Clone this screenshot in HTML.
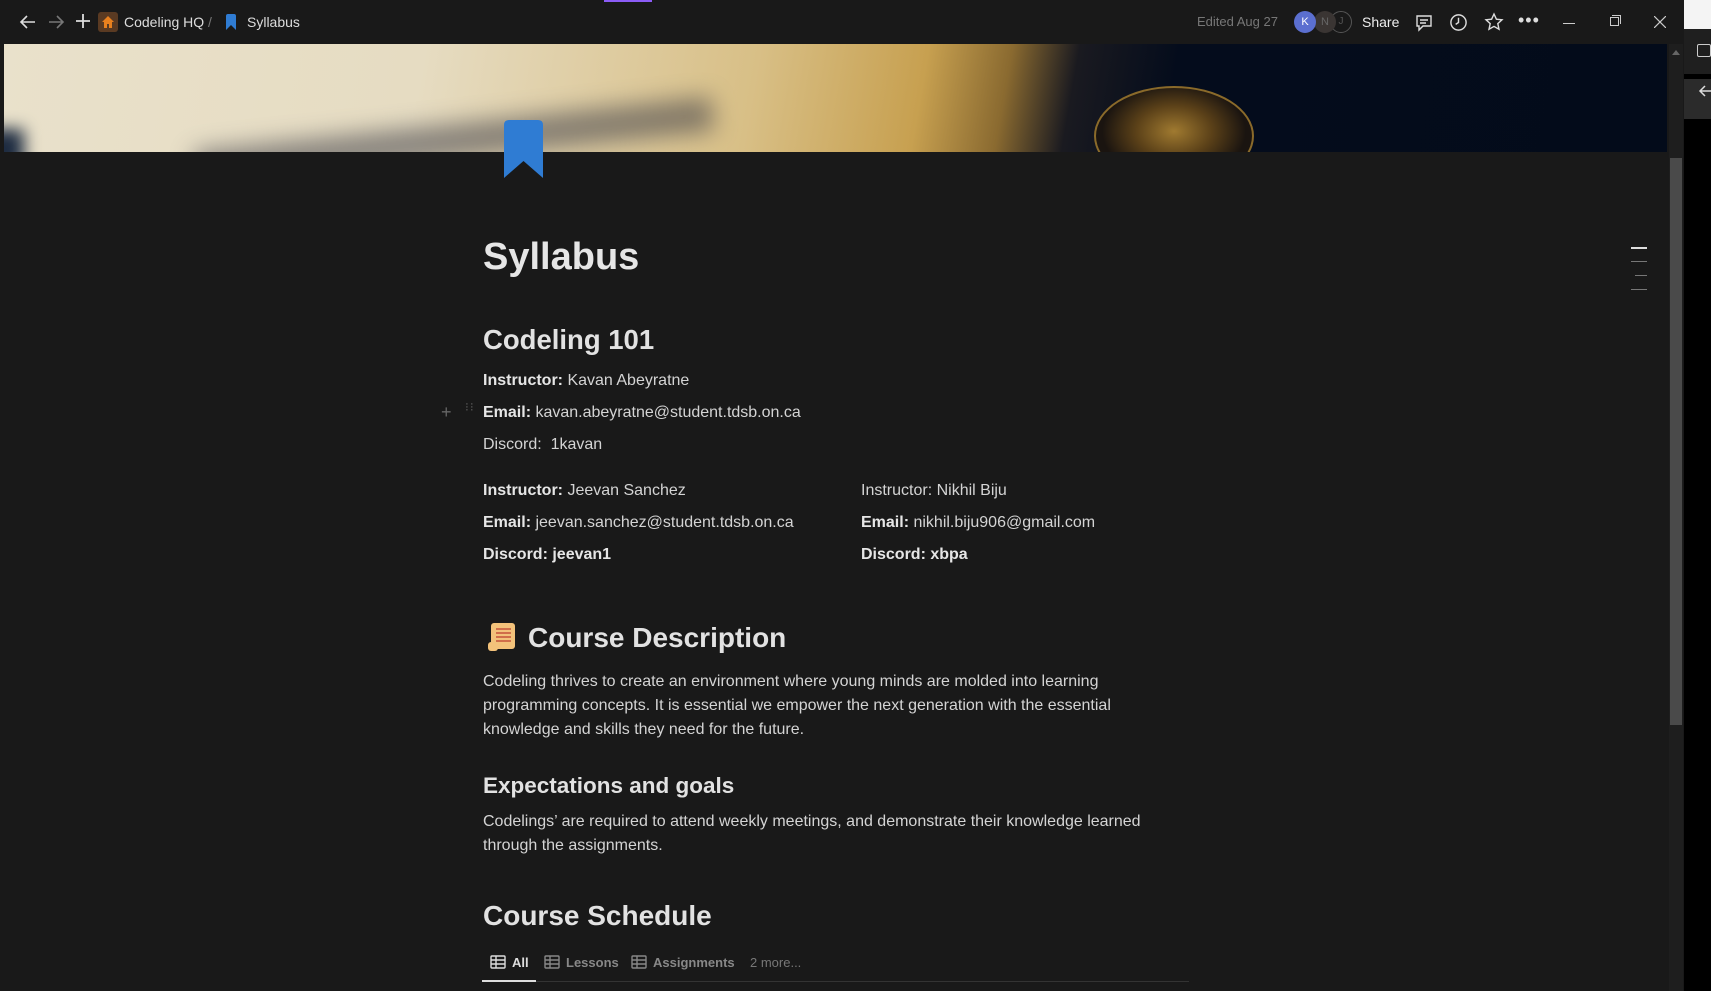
<!DOCTYPE html>
<html><head><meta charset="utf-8"><style>
*{margin:0;padding:0;box-sizing:border-box}
body{width:1711px;height:991px;background:#191919;overflow:hidden;position:relative;font-family:"Liberation Sans",sans-serif;color:#d6d6d6}
.a{position:absolute;white-space:nowrap}
.top{position:absolute;left:0;top:0;width:1684px;height:44px;background:#191919}
.banner{position:absolute;left:4px;top:44px;width:1663px;height:108px;overflow:hidden;
background:linear-gradient(100deg,#e9e1cb 0%,#e6dcc2 25%,#d8bf86 45%,#c7a050 55%,#8a6a30 60%,#1a1a20 64%,#040c1c 70%,#030b1a 100%)}
.t{font-size:16px;color:#d4d4d4}
b{color:#e6e6e6}
</style></head><body>
<div class="top"></div>
<div class="a" style="left:604px;top:0;width:48px;height:2px;background:#8b5cf6"></div>
<svg class="a" style="left:18px;top:12px" width="20" height="20" viewBox="0 0 20 20" fill="none" stroke="#ddd" stroke-width="1.6"><path d="M17 10H4M9 4l-6 6 6 6"/></svg>
<svg class="a" style="left:46px;top:12px" width="20" height="20" viewBox="0 0 20 20" fill="none" stroke="#777" stroke-width="1.6"><path d="M3 10h13M11 4l6 6-6 6"/></svg>
<svg class="a" style="left:74px;top:12px" width="18" height="18" viewBox="0 0 18 18" stroke="#ddd" stroke-width="1.8"><path d="M9 2v14M2 9h14"/></svg>
<div class="a" style="left:98px;top:12px;width:20px;height:20px;background:#5a3a22;border-radius:3px"></div>
<svg class="a" style="left:101px;top:15px" width="14" height="14" viewBox="0 0 14 14"><path d="M7 1L1 7h2v6h3V9h2v4h3V7h2z" fill="#e8801e"/></svg>
<div class="a" style="left:124px;top:14px;font-size:14px;color:#ddd">Codeling HQ <span style="color:#777">/</span></div>
<svg class="a" style="left:226px;top:14px" width="10" height="16" viewBox="0 0 10 16"><path d="M0 2Q0 0 2 0h6q2 0 2 2v14L5 11 0 16z" fill="#2f7cd3"/></svg>
<div class="a" style="left:247px;top:14px;font-size:14px;color:#ddd">Syllabus</div>
<div class="a" style="left:1197px;top:14px;font-size:13px;color:#777">Edited Aug 27</div>
<div class="a" style="left:1330px;top:11px;width:22px;height:22px;border-radius:50%;border:1px solid #555;color:#555;font-size:10px;text-align:center;line-height:20px">J</div>
<div class="a" style="left:1314px;top:11px;width:22px;height:22px;border-radius:50%;background:#3a3533;color:#666;font-size:11px;text-align:center;line-height:22px">N</div>
<div class="a" style="left:1294px;top:11px;width:22px;height:22px;border-radius:50%;background:#5b6fd0;color:#fff;font-size:11px;text-align:center;line-height:22px">K</div>
<div class="a" style="left:1362px;top:14px;font-size:14px;color:#eee">Share</div>
<svg class="a" style="left:1414px;top:13px" width="20" height="20" viewBox="0 0 20 20" fill="none" stroke="#ddd" stroke-width="1.4"><path d="M3 3h14v10H9l-4 4v-4H3z M6 7h8M6 10h6"/></svg>
<svg class="a" style="left:1449px;top:13px" width="19" height="19" viewBox="0 0 20 20" fill="none" stroke="#ddd" stroke-width="1.5"><circle cx="10" cy="10" r="8"/><path d="M10 5v5l-3 2"/></svg>
<svg class="a" style="left:1484px;top:12px" width="20" height="20" viewBox="0 0 20 20" fill="none" stroke="#ddd" stroke-width="1.4"><path d="M10 2l2.4 5.2 5.6.6-4.2 3.8 1.2 5.6L10 14.4 5 17.2l1.2-5.6L2 7.8l5.6-.6z"/></svg>
<div class="a" style="left:1518px;top:10px;font-size:18px;color:#ddd;letter-spacing:1px">•••</div>
<div class="a" style="left:1563px;top:23px;width:12px;height:1px;background:#ccc"></div>
<div class="a" style="left:1610px;top:17px;width:9px;height:9px;border:1px solid #ccc"></div>
<div class="a" style="left:1612px;top:15px;width:9px;height:9px;border-top:1px solid #ccc;border-right:1px solid #ccc"></div>
<svg class="a" style="left:1654px;top:16px" width="12" height="12" stroke="#ccc" stroke-width="1.2"><path d="M0 0l12 12M12 0L0 12"/></svg>
<div class="a" style="left:1684px;top:0;width:27px;height:29px;background:#f4f4f4"></div>
<div class="a" style="left:1684px;top:29px;width:27px;height:962px;background:#000"></div>
<div class="a" style="left:1684px;top:29px;width:27px;height:45px;background:#1f1f1f"></div>
<div class="a" style="left:1684px;top:79px;width:27px;height:40px;background:#2b2b2b"></div>
<div class="a" style="left:1697px;top:44px;width:14px;height:13px;border:1.5px solid #ccc;border-radius:2px"></div>
<svg class="a" style="left:1698px;top:84px" width="14" height="14" fill="none" stroke="#ddd" stroke-width="1.5"><path d="M13 7H2M7 2L2 7l5 5"/></svg>
<div class="a" style="left:1669px;top:44px;width:14px;height:947px;background:#1e1e1e"></div>
<div class="a" style="left:1670px;top:158px;width:12px;height:567px;background:#4a4a4a"></div>
<div class="a" style="left:1672px;top:50px;width:0;height:0;border-left:4px solid transparent;border-right:4px solid transparent;border-bottom:5px solid #666"></div>
<div class="banner">
<div class="a" style="left:190px;top:80px;width:520px;height:34px;background:#3a3a44;filter:blur(12px);transform:rotate(-6deg);opacity:.55"></div>
<div class="a" style="left:-30px;top:85px;width:50px;height:40px;background:#1c2a40;filter:blur(8px)"></div>
<div class="a" style="left:1090px;top:42px;width:160px;height:100px;border-radius:50%;border:2px solid #8a6a2a;background:radial-gradient(ellipse at 50% 45%,#a07a30 0%,#5a4018 35%,#1a1410 65%)"></div>
</div>
<svg class="a" style="left:504px;top:120px" width="39" height="58" viewBox="0 0 39 58"><path d="M0 5Q0 0 5 0h29q5 0 5 5v53L19.5 41 0 58z" fill="#2f7cd3"/></svg>
<div class="a" style="left:483px;top:236px;font-size:38px;font-weight:bold;color:#e6e6e6">Syllabus</div>
<div class="a" style="left:483px;top:324px;font-size:27.5px;font-weight:bold;color:#e2e2e2">Codeling 101</div>
<div class="a t" style="left:483px;top:372px"><b>Instructor:</b> Kavan Abeyratne</div>
<div class="a" style="left:441px;top:402px;color:#666;font-size:18px">+</div>
<div class="a" style="left:465px;top:404px;color:#555;font-size:12px;letter-spacing:1px;line-height:6px">⁝⁝</div>
<div class="a t" style="left:483px;top:404px"><b>Email:</b> kavan.abeyratne@student.tdsb.on.ca</div>
<div class="a t" style="left:483px;top:436px">Discord:&nbsp; 1kavan</div>
<div class="a t" style="left:483px;top:482px"><b>Instructor:</b> Jeevan Sanchez</div>
<div class="a t" style="left:483px;top:514px"><b>Email:</b> jeevan.sanchez@student.tdsb.on.ca</div>
<div class="a t" style="left:483px;top:546px"><b>Discord: jeevan1</b></div>
<div class="a t" style="left:861px;top:482px">Instructor: Nikhil Biju</div>
<div class="a t" style="left:861px;top:514px"><b>Email:</b> nikhil.biju906@gmail.com</div>
<div class="a t" style="left:861px;top:546px"><b>Discord: xbpa</b></div>
<svg class="a" style="left:487px;top:622px" width="30" height="30" viewBox="0 0 30 30"><rect x="4" y="1" width="24" height="26" rx="3" fill="#f3c27a"/><rect x="1" y="20" width="10" height="9" rx="3" fill="#f3c27a"/><path d="M9 7h15M9 11h15M9 15h15M9 19h15" stroke="#c4533a" stroke-width="1.5"/></svg>
<div class="a" style="left:528px;top:622px;font-size:28px;font-weight:bold;color:#e2e2e2">Course Description</div>
<div class="a t" style="left:483px;top:670px;line-height:24px;white-space:normal;width:700px">Codeling thrives to create an environment where young minds are molded into learning<br>programming concepts. It is essential we empower the next generation with the essential<br>knowledge and skills they need for the future.</div>
<div class="a" style="left:483px;top:773px;font-size:22.5px;font-weight:bold;color:#e2e2e2">Expectations and goals</div>
<div class="a t" style="left:483px;top:810px;line-height:24px">Codelings’ are required to attend weekly meetings, and demonstrate their knowledge learned<br>through the assignments.</div>
<div class="a" style="left:483px;top:900px;font-size:28px;font-weight:bold;color:#e2e2e2">Course Schedule</div>
<svg class="a" style="left:490px;top:955px" width="16" height="14" fill="none" stroke="#ddd" stroke-width="1.4"><rect x="1" y="1" width="14" height="12" rx="1"/><path d="M1 5h14M1 9h14M6 1v12"/></svg>
<div class="a" style="left:512px;top:955px;font-size:13px;font-weight:bold;color:#ddd">All</div>
<svg class="a" style="left:544px;top:955px" width="16" height="14" fill="none" stroke="#888" stroke-width="1.4"><rect x="1" y="1" width="14" height="12" rx="1"/><path d="M1 5h14M1 9h14M6 1v12"/></svg>
<div class="a" style="left:566px;top:955px;font-size:13px;font-weight:bold;color:#888">Lessons</div>
<svg class="a" style="left:631px;top:955px" width="16" height="14" fill="none" stroke="#888" stroke-width="1.4"><rect x="1" y="1" width="14" height="12" rx="1"/><path d="M1 5h14M1 9h14M6 1v12"/></svg>
<div class="a" style="left:653px;top:955px;font-size:13px;font-weight:bold;color:#888">Assignments</div>
<div class="a" style="left:750px;top:955px;font-size:13px;color:#777">2 more...</div>
<div class="a" style="left:482px;top:981px;width:707px;height:1px;background:#333"></div>
<div class="a" style="left:482px;top:980px;width:54px;height:2px;background:#ddd"></div>
<div class="a" style="left:1631px;top:247px;width:16px;height:2px;background:#ddd"></div>
<div class="a" style="left:1631px;top:261px;width:16px;height:1px;background:#777"></div>
<div class="a" style="left:1635px;top:275px;width:12px;height:1px;background:#777"></div>
<div class="a" style="left:1631px;top:289px;width:16px;height:1px;background:#777"></div>
</body></html>
